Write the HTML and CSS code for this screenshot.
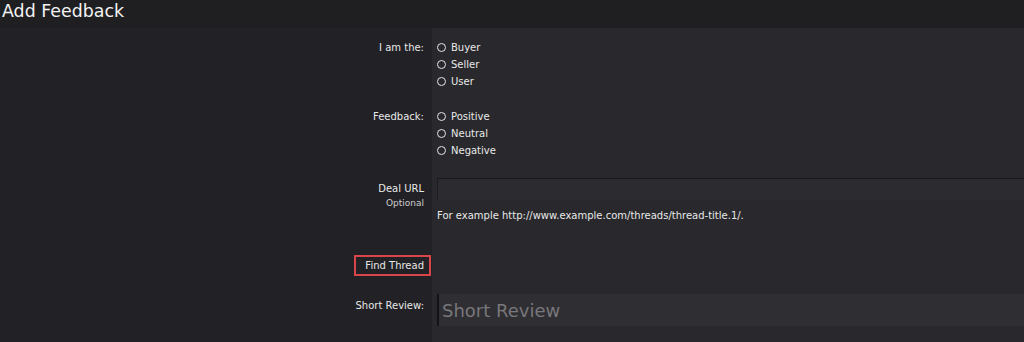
FILE: index.html
```html
<!DOCTYPE html>
<html>
<head>
<meta charset="utf-8">
<link rel="stylesheet" href="styles.css">
</head>
<body>
<div class="header"><h1 class="title">Add Feedback</h1></div>
<div class="form">
  <div class="row row-radio">
    <div class="label"><span>I am the:</span></div>
    <div class="value">
      <label class="radio"><span class="dot"></span>Buyer</label>
      <label class="radio"><span class="dot"></span>Seller</label>
      <label class="radio"><span class="dot"></span>User</label>
    </div>
  </div>
  <div class="row row-radio">
    <div class="label"><span>Feedback:</span></div>
    <div class="value">
      <label class="radio"><span class="dot"></span>Positive</label>
      <label class="radio"><span class="dot"></span>Neutral</label>
      <label class="radio"><span class="dot"></span>Negative</label>
    </div>
  </div>
  <div class="row row-url">
    <div class="label label-url"><span>Deal URL</span><span class="hint">Optional</span></div>
    <div class="value">
      <div class="input-url"></div>
      <p class="explain">For example http://www.example.com/threads/thread-title.1/.</p>
    </div>
  </div>
  <div class="row row-find">
    <div class="label"><span class="find-btn">Find Thread</span></div>
    <div class="value"></div>
  </div>
  <div class="row row-review">
    <div class="label label-review"><span>Short Review:</span></div>
    <div class="value">
      <div class="input-review">Short Review</div>
    </div>
  </div>
</div>
</body>
</html>
```
FILE: styles.css
```css
html, body {
  margin: 0;
  padding: 0;
  background: #1f1e21;
  height: 342px;
  overflow: hidden;
}
body {
  font-family: "DejaVu Sans", Verdana, sans-serif;
  font-size: 10px;
  color: #e8e8e8;
}
.header {
  height: 28px;
  background: #1f1e21;
}
.title {
  margin: 0;
  padding: 0 0 0 2px;
  font-size: 17.4px;
  font-weight: normal;
  line-height: 22px;
  color: #f2f2f2;
}
.form {
  display: flex;
  flex-direction: column;
  background: linear-gradient(to right, #222125 432px, #29282c 432px);
  padding-top: 11px;
  height: 314px;
  box-sizing: border-box;
}
.row {
  display: flex;
}
.label {
  width: 432px;
  flex: none;
  box-sizing: border-box;
  padding-right: 8px;
  display: flex;
  flex-direction: column;
  align-items: flex-end;
  line-height: 17px;
}
.value {
  flex: 1;
  padding-left: 5px;
  min-width: 0;
}
.row-radio {
  margin-bottom: 18px;
}
.radio {
  display: flex;
  align-items: center;
  height: 17px;
  line-height: 17px;
}
.dot {
  width: 7px;
  height: 7px;
  border: 1px solid #e6e6e6;
  border-radius: 50%;
  margin-right: 5px;
  margin-top: -1px;
}
.row-url {
  margin-top: 1px;
}
.label-url {
  padding-top: 4px;
  line-height: 14px;
}
.hint {
  font-size: 9px;
  color: #cfcfcf;
}
.input-url {
  height: 21px;
  background: #2c2b2f;
  border-top: 1px solid #19181b;
  border-left: 1px solid #1d1c1f;
}
.explain {
  margin: 9px 0 0 0;
  line-height: 14px;
}
.row-find {
  margin-top: 32px;
}
.find-btn {
  border: 2px solid #d9464a;
  padding: 0 5px 0 9px;
  margin-right: -7px;
  line-height: 17px;
  height: 17px;
}
.row-review {
  margin-top: 18px;
}
.label-review {
  padding-top: 3px;
}
.input-review {
  height: 32px;
  background: #2f2e32;
  border-left: 2px solid #141316;
  box-sizing: border-box;
  padding-left: 3px;
  font-size: 18px;
  line-height: 34px;
  color: #78777b;
}
```
